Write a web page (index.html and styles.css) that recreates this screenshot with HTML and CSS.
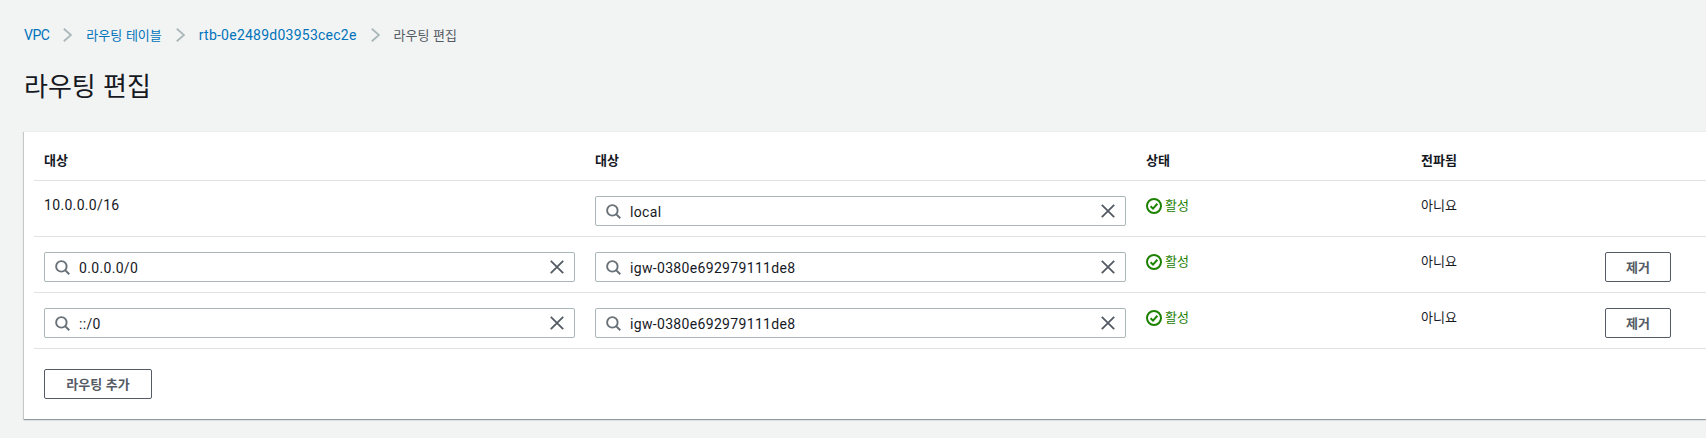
FILE: index.html
```html
<!DOCTYPE html>
<html lang="ko">
<head>
<meta charset="utf-8">
<title>라우팅 편집</title>
<link rel="stylesheet" href="styles.css">
</head>
<body>
<svg class="defs" width="0" height="0" aria-hidden="true">
  <symbol id="i-search" viewBox="0 0 16 16"><circle cx="6.8" cy="6.8" r="5.6" fill="none" stroke="currentColor" stroke-width="2"/><path d="M10.8 10.8l4.4 4.4" fill="none" stroke="currentColor" stroke-width="2.2"/></symbol>
  <symbol id="i-x" viewBox="0 0 14 14"><path d="M.8.8l12.4 12.4M13.2.8L.8 13.2" fill="none" stroke="currentColor" stroke-width="1.8"/></symbol>
  <symbol id="i-ok" viewBox="0 0 16 16"><circle cx="8" cy="8" r="7" fill="none" stroke="currentColor" stroke-width="2"/><path d="M4.6 8.2l2.4 2.4 4.4-4.8" fill="none" stroke="currentColor" stroke-width="2"/></symbol>
  <symbol id="i-chev" viewBox="0 0 9 14"><path d="M.8.8L8 7 .8 13.2" fill="none" stroke="currentColor" stroke-width="1.8"/></symbol>
</svg>

<nav class="crumbs">
  <a class="crumb crumb-short">VPC</a>
  <svg class="chev"><use href="#i-chev"/></svg>
  <a class="crumb ko">라우팅 테이블</a>
  <svg class="chev"><use href="#i-chev"/></svg>
  <a class="crumb crumb-id">rtb-0e2489d03953cec2e</a>
  <svg class="chev"><use href="#i-chev"/></svg>
  <span class="crumb-current ko">라우팅 편집</span>
</nav>

<h1 class="title">라우팅 편집</h1>

<section class="card">
  <div class="row head">
    <div class="ko">대상</div>
    <div class="ko">대상</div>
    <div class="ko">상태</div>
    <div class="ko">전파됨</div>
    <div></div>
  </div>

  <div class="row">
    <div class="cell-text latin">10.0.0.0/16</div>
    <div class="field">
      <svg class="ic-search"><use href="#i-search"/></svg>
      <span class="field-value latin">local</span>
      <svg class="ic-x"><use href="#i-x"/></svg>
    </div>
    <div class="status"><svg class="ic-ok"><use href="#i-ok"/></svg><span class="ko">활성</span></div>
    <div class="cell-text ko">아니요</div>
    <div></div>
  </div>

  <div class="row">
    <div class="field">
      <svg class="ic-search"><use href="#i-search"/></svg>
      <span class="field-value latin">0.0.0.0/0</span>
      <svg class="ic-x"><use href="#i-x"/></svg>
    </div>
    <div class="field">
      <svg class="ic-search"><use href="#i-search"/></svg>
      <span class="field-value latin">igw-0380e692979111de8</span>
      <svg class="ic-x"><use href="#i-x"/></svg>
    </div>
    <div class="status"><svg class="ic-ok"><use href="#i-ok"/></svg><span class="ko">활성</span></div>
    <div class="cell-text ko">아니요</div>
    <div><button class="btn btn-remove">제거</button></div>
  </div>

  <div class="row">
    <div class="field">
      <svg class="ic-search"><use href="#i-search"/></svg>
      <span class="field-value latin">::/0</span>
      <svg class="ic-x"><use href="#i-x"/></svg>
    </div>
    <div class="field">
      <svg class="ic-search"><use href="#i-search"/></svg>
      <span class="field-value latin">igw-0380e692979111de8</span>
      <svg class="ic-x"><use href="#i-x"/></svg>
    </div>
    <div class="status"><svg class="ic-ok"><use href="#i-ok"/></svg><span class="ko">활성</span></div>
    <div class="cell-text ko">아니요</div>
    <div><button class="btn btn-remove">제거</button></div>
  </div>

  <div class="actions">
    <button class="btn btn-add">라우팅 추가</button>
  </div>
</section>
</body>
</html>
```

FILE: styles.css
```css
* { box-sizing: border-box; }
html, body { margin: 0; padding: 0; }
body {
  height: 438px;
  overflow: hidden;
  background: #f2f3f3;
  color: #16191f;
  font-family: Roboto, "Noto Sans CJK KR", sans-serif;
  font-size: 14px;
  line-height: 22px;
}
.defs { position: absolute; }
.ko { font-family: "Noto Sans CJK KR", sans-serif; font-size: 13px; }
.latin { letter-spacing: .33px; }

.crumbs {
  display: flex;
  align-items: center;
  height: 22px;
  margin: 24px 0 0 24px;
}
.crumb { color: #0073bb; }
.crumb-short { letter-spacing: -.5px; }
.crumb-id { letter-spacing: .24px; }
.crumb-current { color: #545b64; }
.chev { width: 9px; height: 14px; margin: 0 14px; color: #aab7b8; }

.title {
  margin: 21px 0 0 24px;
  font-family: "Noto Sans CJK KR", sans-serif;
  font-size: 26px;
  font-weight: 400;
  line-height: 36px;
}

.card {
  margin: 28px 0 0 24px;
  background: #fff;
  border-top: 1px solid #eaeded;
  box-shadow: 0 1px 1px 0 rgba(0, 28, 36, .3), -1px 1px 1px 0 rgba(0, 28, 36, .15);
  padding-left: 10px;
}

.row {
  display: grid;
  grid-template-columns: 551px 551px 275px 184px 66px;
  height: 56px;
  padding: 15px 0 0 10px;
  border-bottom: 1px solid #dfe2e2;
}
.row.head {
  height: 49px;
  padding-top: 17px;
  font-weight: 700;
}
.row.head .ko { font-weight: 700; }

.cell-text, .status { line-height: 18px; }

.field {
  display: flex;
  align-items: center;
  width: 531px;
  height: 30px;
  padding: 0 10px;
  background: #fff;
  border: 1px solid #aab7b8;
  border-radius: 2px;
}
.field-value { flex: 1; margin-left: 9px; position: relative; top: 1px; }
.ic-search { width: 15px; height: 15px; color: #687078; }
.ic-x { width: 14px; height: 14px; color: #545b64; }

.status { display: flex; align-items: flex-start; color: #1d8102; }
.ic-ok { width: 16px; height: 16px; margin: 2px 3px 0 0; }

.btn {
  display: block;
  height: 30px;
  padding: 0 0 2px;
  background: #fff;
  border: 1px solid #545b64;
  border-radius: 2px;
  color: #545b64;
  font-family: "Noto Sans CJK KR", sans-serif;
  font-size: 13px;
  font-weight: 700;
}
.btn-remove { width: 66px; }
.btn-add { width: 108px; }
.actions { padding: 20px 0 20px 10px; }
```
